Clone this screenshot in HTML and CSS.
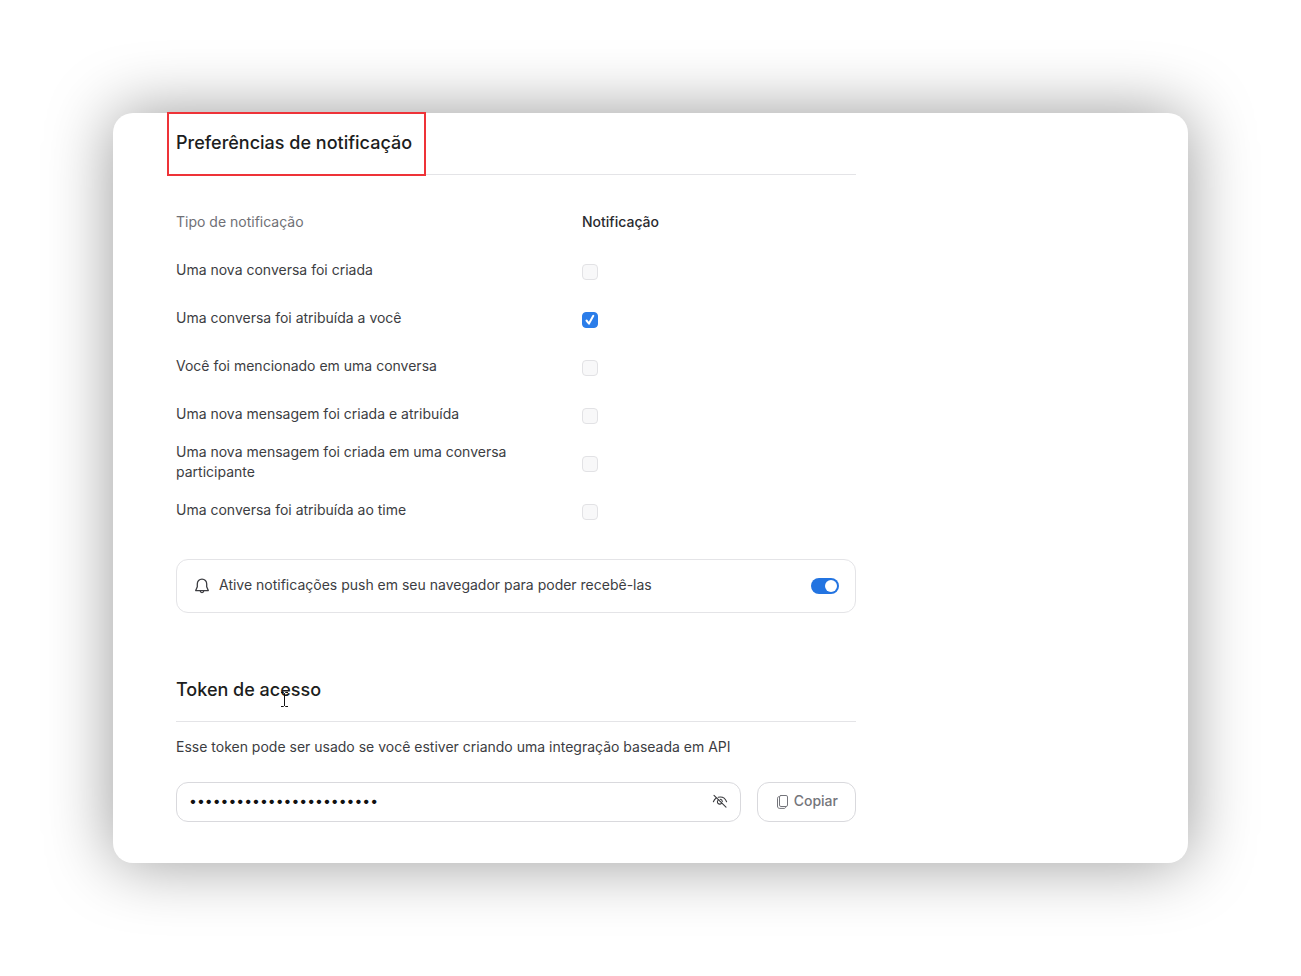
FILE: index.html
```html
<!DOCTYPE html>
<html lang="pt-BR">
<head>
    <meta charset="UTF-8">
    <meta name="viewport" content="width=device-width, initial-scale=1.0">
    <title>Preferências de notificação</title>
    <link rel="stylesheet" href="styles.css">
</head>
<body>
    <main class="card">
        <div class="content">
            <section>
                <div class="section-header">
                    <h2 class="highlight">Preferências de notificação</h2>
                </div>

                <table class="prefs">
                    <thead>
                        <tr>
                            <th class="type">Tipo de notificação</th>
                            <th>Notificação</th>
                        </tr>
                    </thead>
                    <tbody>
                        <tr>
                            <td><label for="conv-created">Uma nova conversa foi criada</label></td>
                            <td class="check"><input type="checkbox" id="conv-created"></td>
                        </tr>
                        <tr>
                            <td><label for="conv-assigned">Uma conversa foi atribuída a você</label></td>
                            <td class="check"><input type="checkbox" id="conv-assigned" checked></td>
                        </tr>
                        <tr>
                            <td><label for="mention">Você foi mencionado em uma conversa</label></td>
                            <td class="check"><input type="checkbox" id="mention"></td>
                        </tr>
                        <tr>
                            <td><label for="msg-assigned">Uma nova mensagem foi criada e atribuída</label></td>
                            <td class="check"><input type="checkbox" id="msg-assigned"></td>
                        </tr>
                        <tr>
                            <td><label for="msg-participating">Uma nova mensagem foi criada em uma conversa participante</label></td>
                            <td class="check"><input type="checkbox" id="msg-participating"></td>
                        </tr>
                        <tr>
                            <td><label for="conv-team">Uma conversa foi atribuída ao time</label></td>
                            <td class="check"><input type="checkbox" id="conv-team"></td>
                        </tr>
                    </tbody>
                </table>

                <div class="push">
                    <svg width="16" height="16" viewBox="0 0 16 16" fill="none" stroke="currentColor" stroke-width="1.3" stroke-linejoin="round" stroke-linecap="round" aria-hidden="true">
                        <path d="M8 1.2C5.2 1.2 3.3 3.2 3.3 5.9V8.8L1.7 12.6H14.3L12.7 8.8V5.9C12.7 3.2 10.8 1.2 8 1.2Z"/>
                        <path d="M6.2 12.8C6.3 13.9 7 14.6 8 14.6S9.7 13.9 9.8 12.8"/>
                    </svg>
                    <label for="push-toggle">Ative notificações push em seu navegador para poder recebê-las</label>
                    <input type="checkbox" class="switch" id="push-toggle" role="switch" checked>
                </div>
            </section>

            <section class="token">
                <div class="section-header">
                    <h2>Token de ac<span class="caret-at">e<svg class="cursor" width="9" height="15" viewBox="0 0 9 15" fill="none" stroke="#111" aria-hidden="true"><path d="M1 .5H3.5L4.5 1.5L5.5 .5H8M4.5 1.5V14M1 14.5H3.5L4.5 13.5L5.5 14.5H8"/></svg></span>sso</h2>
                </div>
                <p><label for="token">Esse token pode ser usado se você estiver criando uma integração baseada em API</label></p>
                <div class="token-row">
                    <div class="field">
                        <input type="password" id="token" value="a1b2c3d4e5f6g7h8i9j0k1l2" readonly>
                        <button type="button" class="reveal" aria-label="Mostrar token">
                            <svg width="16" height="16" viewBox="0 0 16 16" fill="none" stroke="currentColor" stroke-width="1.1" stroke-linecap="round" aria-hidden="true">
                                <path d="M2 2.4L14 14.2"/>
                                <path d="M4.2 5C2.9 5.9 2 7.2 1.4 8.8"/>
                                <path d="M6.2 4.3C10.2 3.4 13.2 5.2 14.6 8.8"/>
                                <path d="M6.5 6.9A2.3 2.3 0 1 0 9.7 10"/>
                                <path d="M8.2 6.3A2.3 2.3 0 0 1 10.3 8.5"/>
                            </svg>
                        </button>
                    </div>
                    <button type="button" class="copy">
                        <svg width="14" height="16" viewBox="0 0 14 16" fill="none" stroke="currentColor" stroke-width="1" stroke-linecap="round" aria-hidden="true">
                            <rect x="4.5" y="2.5" width="8" height="11" rx="1.4"/>
                            <path d="M4 3.6C3 3.8 2.5 4.3 2.5 5.2V13C2.5 14.7 3.3 15.4 4.8 15.4H9C10 15.4 10.6 15 10.8 14"/>
                        </svg>
                        Copiar
                    </button>
                </div>
            </section>
        </div>
    </main>
</body>
</html>
```

FILE: styles.css
```css
* {
    box-sizing: border-box;
}
body {
    margin: 0;
    padding: 113px;
    background: #fff;
    color: #3c3d42;
    font-family: Inter, "Liberation Sans", sans-serif;
    font-size: 14px;
    line-height: 20px;
}
.card {
    padding: 0 63px 41px;
    background: #fff;
    border-radius: 20px;
    box-shadow: 0 0 66px rgba(0, 0, 0, 0.4);
}
.content {
    max-width: 680px;
}
.section-header {
    display: flex;
    height: 62px;
    align-items: center;
    padding-bottom: 2px;
    border-bottom: 1px solid #e4e4e7;
}
h2 {
    margin: 0;
    color: #1c1d20;
    font-size: 18px;
    font-weight: 500;
    line-height: 24px;
}
.highlight {
    position: relative;
}
.highlight::after {
    content: "";
    position: absolute;
    top: -19px;
    right: -14px;
    bottom: -21px;
    left: -9px;
    border: 2px solid #ee3338;
}

/* notification types */
.prefs {
    width: 100%;
    margin-top: 23px;
    border-collapse: collapse;
    table-layout: fixed;
}
.prefs th,
.prefs td {
    height: 48px;
    padding: 0;
    text-align: left;
    vertical-align: middle;
}
.prefs th {
    color: #2a2b2f;
    font-weight: 500;
}
.prefs .type {
    width: 406px;
    color: #6f7076;
    font-weight: 400;
}
.prefs .check {
    padding-top: 4px;
}
.check input {
    display: block;
    width: 16px;
    height: 16px;
    margin: 0;
    appearance: none;
    background: #f8f8f9;
    border: 1px solid #e2e2e5;
    border-radius: 4px;
}
.check input:checked {
    border-color: #2b7de9;
    background: #2b7de9 url("data:image/svg+xml,%3Csvg xmlns='http://www.w3.org/2000/svg' viewBox='0 0 14 14' fill='none' stroke='white' stroke-width='2' stroke-linecap='round' stroke-linejoin='round'%3E%3Cpath d='M3.5 7.5L6 10.6L10.3 2.8'/%3E%3C/svg%3E") center / 14px no-repeat;
}

.push {
    display: flex;
    align-items: center;
    gap: 9px;
    min-height: 54px;
    margin-top: 25px;
    padding: 0 16px 0 17px;
    border: 1px solid #e4e4e7;
    border-radius: 12px;
}
.push label {
    flex: 1;
    padding-bottom: 2px;
}
.switch {
    display: flex;
    align-items: center;
    justify-content: flex-end;
    width: 28px;
    height: 16px;
    margin: 0;
    padding: 2px;
    appearance: none;
    background: #2374e1;
    border-radius: 8px;
}
.switch::before {
    content: "";
    width: 12px;
    height: 12px;
    background: #fff;
    border-radius: 50%;
}
.switch:not(:checked) {
    justify-content: flex-start;
    background: #d4d4d8;
}

/* access token */
.token {
    margin-top: 47px;
}
.token p {
    margin: 15px 0 25px;
}
.caret-at {
    position: relative;
}
.cursor {
    position: absolute;
    top: 13px;
    left: 0;
}
.token-row {
    display: flex;
    gap: 16px;
}
.field {
    display: flex;
    flex: 1;
    align-items: center;
    height: 40px;
    padding: 0 12px 2px;
    border: 1px solid #d9d9dd;
    border-radius: 12px;
}
.field input {
    flex: 1;
    min-width: 0;
    padding: 0;
    background: none;
    border: 0;
    outline: 0;
    color: #111;
    font: inherit;
}
button {
    font: inherit;
    cursor: pointer;
}
.reveal {
    display: flex;
    padding: 0;
    background: none;
    border: 0;
    color: #3a3b3f;
}
.copy {
    display: flex;
    align-items: center;
    justify-content: center;
    gap: 5px;
    height: 40px;
    padding: 0 17px 2px;
    background: #fff;
    border: 1px solid #d9d9dd;
    border-radius: 12px;
    color: #74757b;
    font-weight: 500;
}
```
